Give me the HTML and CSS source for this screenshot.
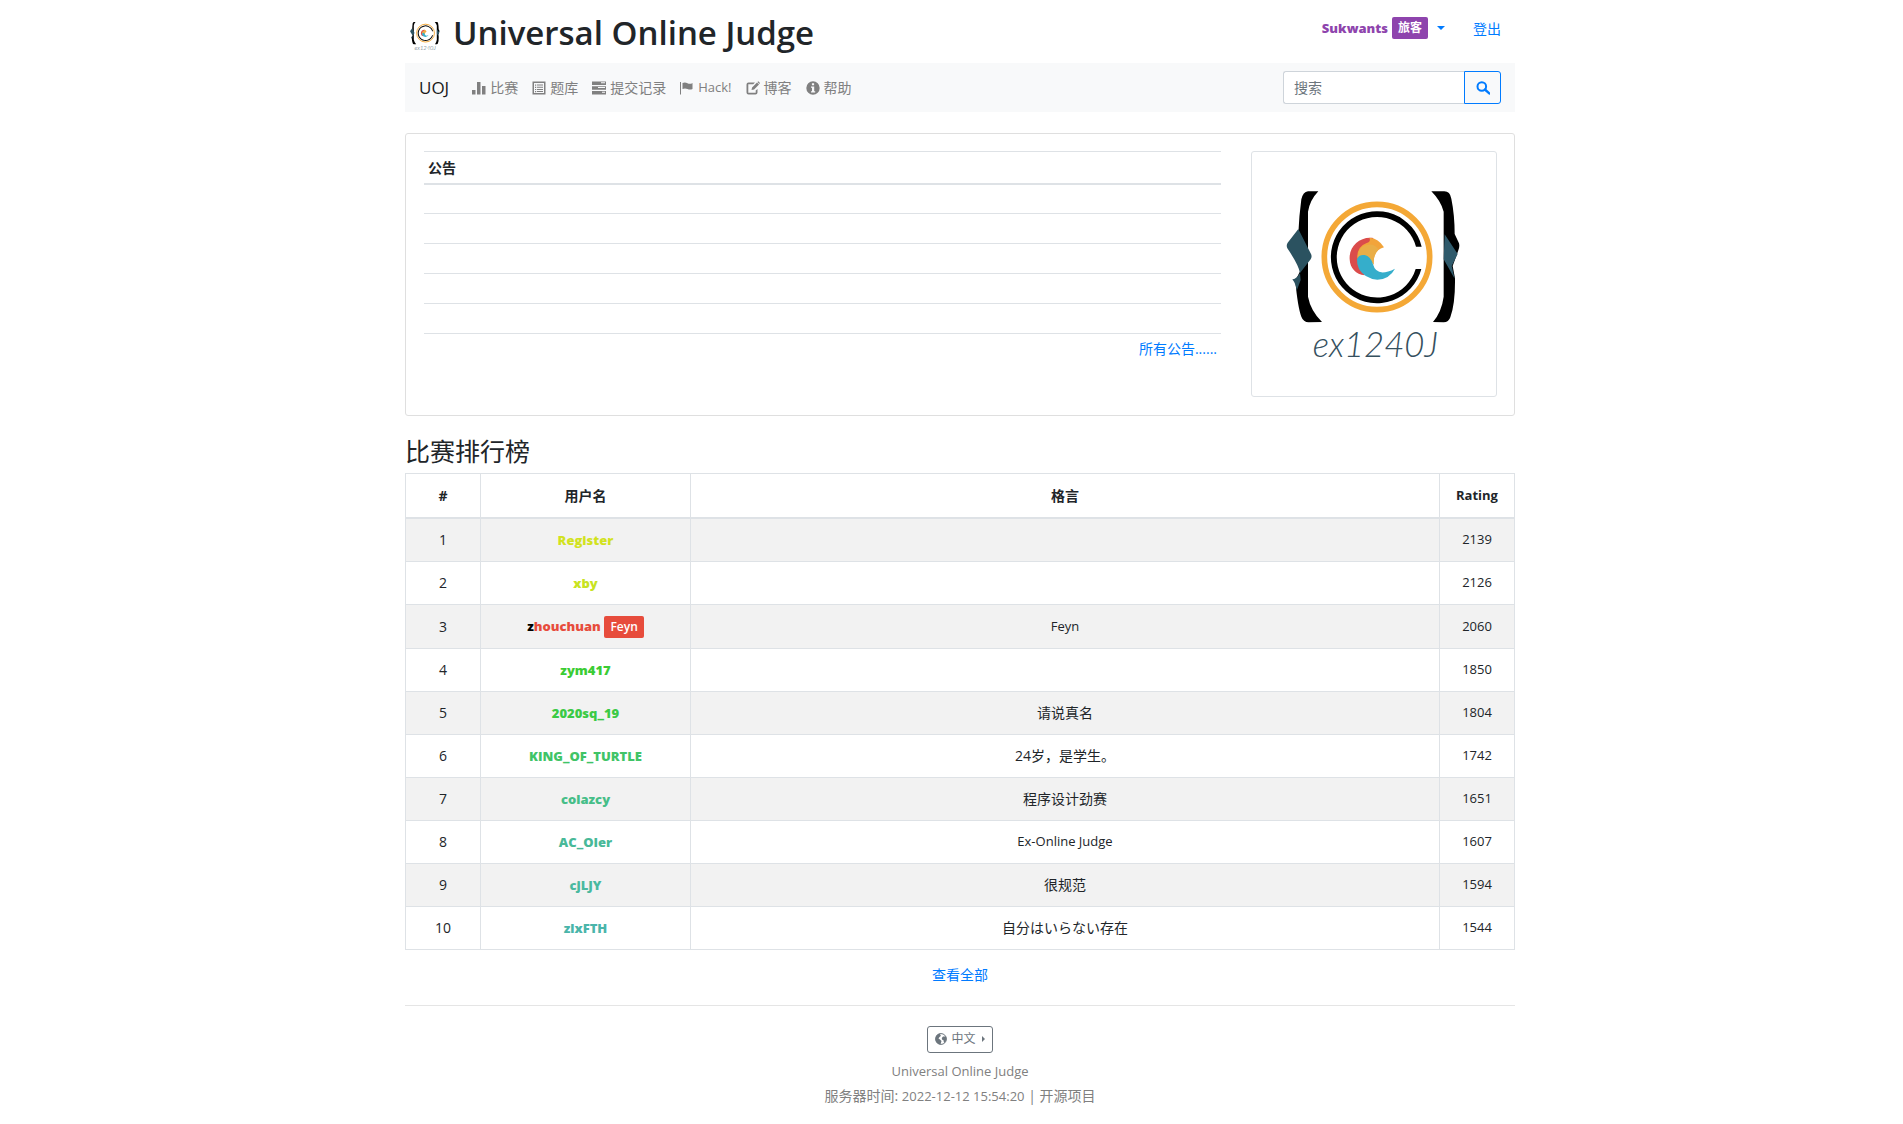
FILE: index.html
```html
<!DOCTYPE html>
<html lang="zh-CN">
<head>
<meta charset="utf-8">
<meta name="viewport" content="width=device-width, initial-scale=1">
<title>Universal Online Judge</title>
<link rel="stylesheet" href="styles.css">
</head>
<body>
<svg class="sprite" aria-hidden="true">
  <symbol id="logo" viewBox="78 78 708 708">
    <path d="M265 184H234Q219 186 214 208Q207 260 205 310L222 400L196 452Q203 530 214 560Q220 576 236 577L276 576Q242 542 234 500V245Q240 210 265 184Z"/>
    <path fill="#2b5260" d="M205 297L243 372Q247 380 242 388L210 429Q206 405 172 355Q168 346 173 338Z"/>
    <path fill="#2b5260" d="M210 430L212 450L200 482Q198 462 187 448Q198 448 210 430Z"/>
    <path d="M604 184H643Q660 184 664 206Q674 255 674 312L687 340Q690 350 684 364L668 408L675 445Q676 520 661 562Q656 577 641 577L609 576Q635 545 641 500V245Q632 212 604 184Z"/>
    <path fill="#2f5a6b" d="M644 313L683 372L665 408L674 446L641 388Z"/>
    <circle cx="441" cy="381" r="158" fill="none" stroke="#f4a836" stroke-width="17"/>
    <path d="M575 350A138 138 0 1 0 574 417H557A121 121 0 1 1 558 350Z"/>
    <path fill="#db4c4b" d="M430 324C390 318 356 350 359 388C360 415 378 434 404 436L384 385L424 338Z"/>
    <path fill="#f2a43a" d="M418 323Q446 325 462 352Q440 358 433 380Q430 392 431 404Q412 372 382 386Q380 350 410 339Q424 335 418 323Z"/>
    <path fill="#e9ae47" d="M383 380Q385 347 414 344Q432 340 446 358Q429 374 431 404Q412 374 383 380Z"/>
    <path fill="#35aecb" d="M381 388Q386 373 404 375Q422 379 429 403Q440 444 495 416Q478 448 442 449Q404 446 387 417Q380 402 381 388Z"/>
  </symbol>
  <symbol id="i-stats" viewBox="0 0 14 14"><path d="M0 9h3.500v4.500H0zM5 1h3.500v12.500H5zM10 5h3.500v8.500H10z"/></symbol>
  <symbol id="i-list" viewBox="0 0 14 14"><path fill-rule="evenodd" d="M.5.5h13v13H.5zM2 2v10h10V2zM3 3.500h1.200v1.200H3zM5 3.500h6v1H5zM3 5.700h1.200v1.200H3zM5 5.800h6v1H5zM3 7.900h1.200v1.200H3zM5 8h6v1H5zM3 10h1.200v1.200H3zM5 10.100h6v1H5z"/></symbol>
  <symbol id="i-tasks" viewBox="0 0 14 14"><path fill-rule="evenodd" d="M0 .5h14v3.500H0zM9 1.300v1h4v-1zM0 5.200h14v3.500H0zM6 6v1h7V6zM0 10h14v3.500H0zM10 10.800v1h3v-1z"/></symbol>
  <symbol id="i-flag" viewBox="0 0 14 14"><path d="M0 1h1v12.500H0zM2.500 2Q5 .8 7.500 2.200T12.500 2v6Q10 9.200 7.500 8T2.500 8z"/></symbol>
  <symbol id="i-edit" viewBox="0 0 14 14"><path d="M9 1.500H2.500Q.5 1.500.5 3.500v8q0 2 2 2h7q2 0 2-2V8L9.700 9.500V11.700H2.300V3.300h4.900z"/><path d="M5.500 9l.6-2.600L11 1.500l2 2L8.100 8.400zM11.500 1l.8-.8L14 2l-.7.9z"/></symbol>
  <symbol id="i-info" viewBox="0 0 14 14"><path fill-rule="evenodd" d="M7 .3a6.700 6.700 0 1 0 0 13.400A6.700 6.700 0 1 0 7 .3zM5.900 2.300h2.200v2H5.900zM5 5.500h3.200v4.700h1v1.200H5v-1.200h1V6.700H5z"/></symbol>
  <symbol id="i-search" viewBox="0 0 14 14"><circle cx="5.800" cy="5.500" r="4.300" fill="none" stroke="currentColor" stroke-width="2"/><path d="M8.900 8.500l4.400 3.900" fill="none" stroke="currentColor" stroke-width="2.400" stroke-linecap="round"/></symbol>
  <symbol id="i-globe" viewBox="0 0 12 12"><circle cx="6" cy="6" r="5.400" fill="none" stroke="currentColor" stroke-width="1"/><path d="M1 3Q3 .5 5.500.6L5 2l1.200.8L4.500 4 3.500 5.500 5 6.500 6.500 8 5.500 11.500Q1 11 .6 6.500zM8 3.500L11 3.500Q12 7 9.500 10L8.700 9V7.500L7 6.500 6.800 5z"/></symbol>
</svg>

<div class="container">
  <header class="header">
    <h1 class="title">
      <svg class="title-logo" viewBox="78 78 708 708" aria-hidden="true"><use href="#logo" x="78" y="78" width="708" height="708"/><text class="logo-text" x="248" y="680">ex1240J</text></svg>
      <span>Universal Online Judge</span>
    </h1>
    <nav class="account" aria-label="账户">
      <a class="account-user" href="#"><span class="user user-purple">Sukwants</span><span class="badge badge-purple">旅客</span><span class="caret-down"></span></a>
      <a href="#">登出</a>
    </nav>
  </header>

  <div class="navbar">
    <nav class="nav-links" aria-label="主导航">
      <a class="brand" href="#">UOJ</a>
      <a class="nav-link" href="#"><svg class="icon"><use href="#i-stats"/></svg>比赛</a>
      <a class="nav-link" href="#"><svg class="icon"><use href="#i-list"/></svg>题库</a>
      <a class="nav-link" href="#"><svg class="icon"><use href="#i-tasks"/></svg>提交记录</a>
      <a class="nav-link latin" href="#"><svg class="icon"><use href="#i-flag"/></svg>Hack!</a>
      <a class="nav-link" href="#"><svg class="icon"><use href="#i-edit"/></svg>博客</a>
      <a class="nav-link" href="#"><svg class="icon"><use href="#i-info"/></svg>帮助</a>
    </nav>
    <form class="search">
      <input class="search-input" type="text" placeholder="搜索" aria-label="搜索">
      <button class="search-button" type="button" aria-label="搜索"><svg class="icon"><use href="#i-search"/></svg></button>
    </form>
  </div>

  <main>
    <section class="card">
      <div class="notices">
        <table class="notice-table">
          <thead><tr><th>公告</th></tr></thead>
          <tbody>
            <tr><td></td></tr>
            <tr><td></td></tr>
            <tr><td></td></tr>
            <tr><td></td></tr>
            <tr><td></td></tr>
            <tr><td class="notice-more"><a href="#">所有公告......</a></td></tr>
          </tbody>
        </table>
      </div>
      <div class="thumbnail"><svg class="thumbnail-logo" viewBox="78 78 708 708"><use href="#logo" x="78" y="78" width="708" height="708"/><text class="logo-text" x="248" y="680">ex1240J</text></svg></div>
    </section>

    <h3 class="section-title">比赛排行榜</h3>
    <table class="ranking">
      <colgroup><col class="col-narrow"><col class="col-user"><col><col class="col-narrow"></colgroup>
      <thead><tr><th>#</th><th>用户名</th><th>格言</th><th class="latin">Rating</th></tr></thead>
      <tbody>
        <tr><td>1</td><td><a class="user user-1" href="#">Register</a></td><td></td><td>2139</td></tr>
        <tr><td>2</td><td><a class="user user-2" href="#">xby</a></td><td></td><td>2126</td></tr>
        <tr><td>3</td><td><a class="user user-3" href="#"><span class="user-initial">z</span>houchuan</a> <span class="badge badge-red">Feyn</span></td><td class="latin">Feyn</td><td>2060</td></tr>
        <tr><td>4</td><td><a class="user user-4" href="#">zym417</a></td><td></td><td>1850</td></tr>
        <tr><td>5</td><td><a class="user user-5" href="#">2020sq_19</a></td><td>请说真名</td><td>1804</td></tr>
        <tr><td>6</td><td><a class="user user-6" href="#">KING_OF_TURTLE</a></td><td>24岁，是学生。</td><td>1742</td></tr>
        <tr><td>7</td><td><a class="user user-7" href="#">colazcy</a></td><td>程序设计劲赛</td><td>1651</td></tr>
        <tr><td>8</td><td><a class="user user-8" href="#">AC_OIer</a></td><td class="latin">Ex-Online Judge</td><td>1607</td></tr>
        <tr><td>9</td><td><a class="user user-9" href="#">cjLJY</a></td><td>很规范</td><td>1594</td></tr>
        <tr><td>10</td><td><a class="user user-10" href="#">zlxFTH</a></td><td>自分はいらない存在</td><td>1544</td></tr>
      </tbody>
    </table>
    <div class="view-all"><a href="#">查看全部</a></div>
  </main>

  <footer class="footer">
    <button class="language" type="button"><svg class="language-icon"><use href="#i-globe"/></svg>中文<span class="caret-right"></span></button>
    <p class="latin">Universal Online Judge</p>
    <p>服务器时间: <time class="latin">2022-12-12 15:54:20</time> | <a class="plain" href="#">开源项目</a></p>
  </footer>
</div>
</body>
</html>
```
FILE: styles.css
```css
*, *::before, *::after { box-sizing: border-box; }

body {
  margin: 0;
  padding-left: 17px;
  font: 14px/21px "Open Sans", "Noto Sans CJK SC", sans-serif;
  color: #212529;
  background: #fff;
}

a { color: #007bff; text-decoration: none; }

.sprite { position: absolute; width: 0; height: 0; }
.logo-text { font-family: Lato, sans-serif; font-size: 104px; font-style: italic; font-weight: 300; fill: #35505e; }
.icon { width: 14px; height: 14px; fill: currentColor; }
.latin { font-size: 13px; }

.container { max-width: 1140px; margin: 0 auto; padding: 0 15px; }

/* Page header */
.header { display: flex; justify-content: space-between; align-items: flex-start; height: 63px; }
.title { display: flex; align-items: center; gap: 8px; margin: 0; padding-top: 10px; font-size: 33px; line-height: 42px; font-weight: 600; }
.title-logo { width: 40px; height: 40px; margin-top: 6px; }
.account { display: flex; align-items: center; gap: 28px; padding: 17px 14px 0; }
.account-user { display: flex; align-items: center; gap: 4px; }
.caret-down { margin-left: 5px; border: 4px solid transparent; border-top-color: #007bff; border-bottom: 0; }

.user { font-size: 13px; font-weight: 800; }
.badge { display: inline-block; padding: 0 6px; border-radius: 2px; color: #fff; font-size: 12px; line-height: 22px; font-weight: 700; }
.badge-purple { background: #8e44ad; }
.badge-red { background: #e74c3c; font-weight: 600; }

/* Navigation bar */
.navbar { display: flex; justify-content: space-between; align-items: center; height: 49px; padding: 0 14px; background: #f8f9fa; }
.nav-links { display: flex; align-items: center; }
.brand { margin-right: 16px; font-size: 17px; color: #1a1a1a; }
.nav-link { display: flex; align-items: center; gap: 4px; padding: 7px; color: #808080; }
.search { display: flex; width: 218px; height: 33px; }
.search-input { flex: 1; min-width: 0; padding: 5px 10px; border: 1px solid #ced4da; border-right: 0; border-radius: 3px 0 0 3px; font: inherit; }
.search-input::placeholder { color: #6c757d; opacity: 1; }
.search-button { display: flex; align-items: center; justify-content: center; width: 37px; padding: 0; border: 1px solid #007bff; border-radius: 0 3px 3px 0; background: transparent; color: #007bff; }

/* Announcements */
.card { display: flex; gap: 30px; margin-top: 21px; padding: 17px 17px 18px 18px; border: 1px solid #dfdfdf; border-radius: 3px; }
.notices { flex: 1; }
.notice-table { width: 100%; border-collapse: collapse; }
.notice-table th, .notice-table td { height: 30px; padding: 4px; border-top: 1px solid #dee2e6; text-align: left; }
.notice-table th { height: 32px; border-bottom: 2px solid #dee2e6; font-weight: 700; }
.notice-table .notice-more { text-align: right; }
.thumbnail { display: flex; width: 246px; height: 246px; padding: 4px; border: 1px solid #dee2e6; border-radius: 3px; }
.thumbnail-logo { width: 236px; height: 236px; }

/* Ranking */
.section-title { margin: 21px 0 7px; font-size: 25px; line-height: 29px; font-weight: 400; }
.ranking { width: 100%; border-collapse: collapse; table-layout: fixed; text-align: center; }
.ranking th, .ranking td { height: 43px; padding: 10px 0; border: 1px solid #dee2e6; }
.ranking thead th { height: 44px; border-bottom-width: 2px; font-weight: 700; }
.ranking td:last-child { font-size: 13px; }
.ranking tbody tr:nth-child(odd) { background: #f2f2f2; }
.col-narrow { width: 75px; }
.col-user { width: 210px; }
.user-purple { color: #8e44ad; }
.user-initial { color: #000; }
.user-1 { color: #d2e21f; }
.user-2 { color: #c8e322; }
.user-3 { color: #e74c3c; }
.user-4 { color: #3bcc34; }
.user-5 { color: #3bca45; }
.user-6 { color: #40c467; }
.user-7 { color: #46be88; }
.user-8 { color: #48b998; }
.user-9 { color: #49b99f; }
.user-10 { color: #4ab5aa; }
.view-all { padding: 14px 0 20px; text-align: center; }

/* Footer */
.footer { display: flex; flex-direction: column; align-items: center; padding: 20px 0 18px; border-top: 1px solid #e5e5e5; color: #808080; }
.footer p { margin: 0 0 3px; }
.plain { color: inherit; }
.language { display: flex; align-items: center; gap: 4px; height: 27px; margin-bottom: 8px; padding: 0 7px; border: 1px solid #6c757d; border-radius: 3px; background: transparent; color: #6c757d; font: 12px/18px "Open Sans", "Noto Sans CJK SC", sans-serif; }
.language-icon { width: 12px; height: 12px; fill: currentColor; }
.caret-right { margin-left: 2px; border: 3px solid transparent; border-left-color: #6c757d; border-right: 0; }
```
